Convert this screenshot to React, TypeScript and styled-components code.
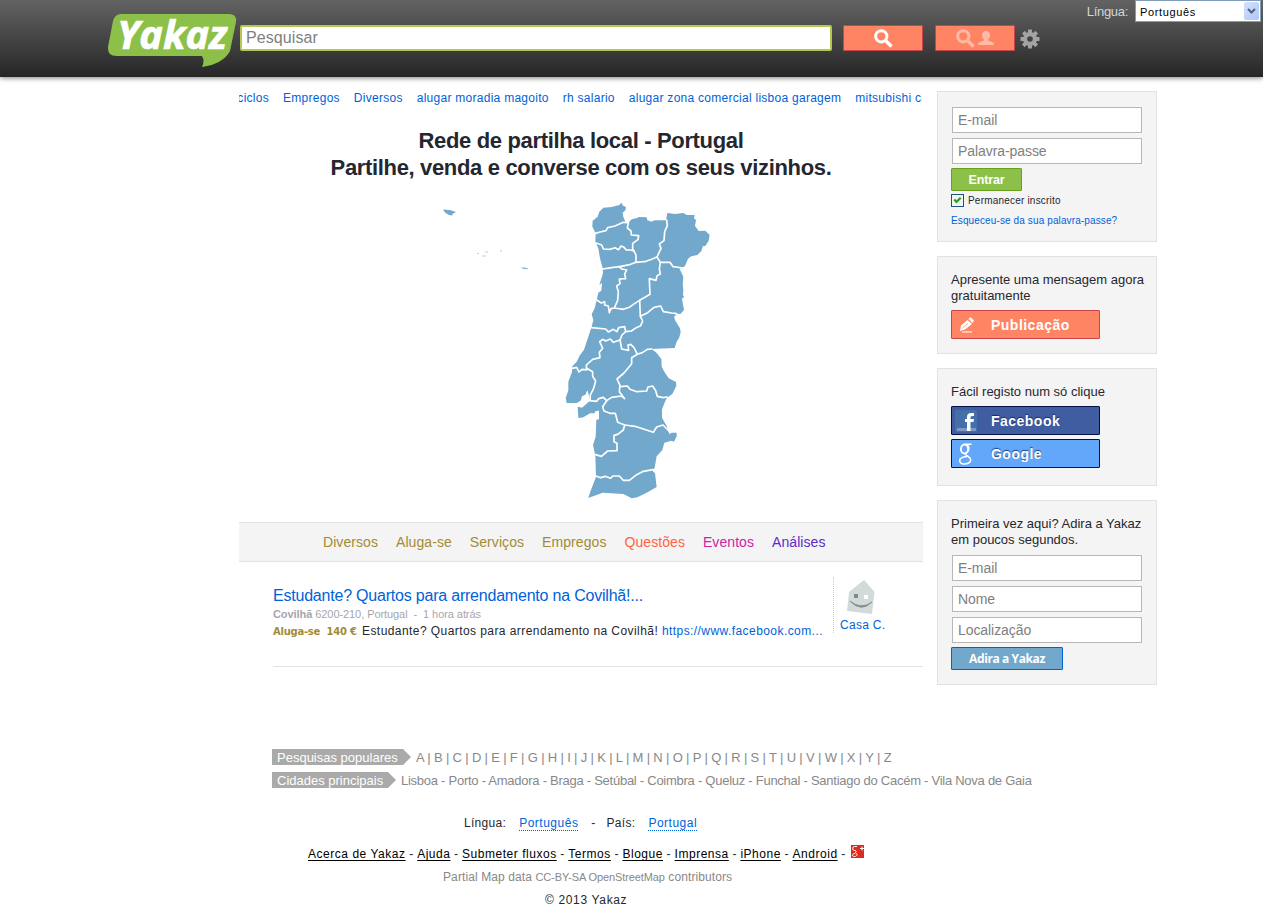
import React from "react";
import styled, { createGlobalStyle } from "styled-components";

const Global = createGlobalStyle`
  * { box-sizing: border-box; }
  html, body { margin: 0; padding: 0; background: #fff; }
  body { font: 13px/16px "Liberation Sans", Arial, sans-serif; color: #25272f; overflow: hidden; }
  a { color: #0062d9; text-decoration: none; }
`;

const Page = styled.div`
  width: 1263px;
  height: 922px;
  overflow: hidden;
`;

/* ---------- header ---------- */
const Header = styled.header`
  height: 77px;
  display: flex;
  align-items: flex-start;
  padding-left: 107px;
  background: linear-gradient(#636363, #262626);
  box-shadow: 0 1px 5px rgba(0, 0, 0, 0.5);
`;
const Logo = styled.svg`
  display: block;
  width: 130px;
  height: 56px;
  margin-top: 12px;
`;
const SearchInput = styled.input`
  width: 592px;
  height: 26px;
  margin: 25px 11px 0 3px;
  padding: 0 4px;
  border: 2px solid #b3c94b;
  border-radius: 2px;
  background: #fff;
  font: 16px "Liberation Sans", Arial, sans-serif;
  letter-spacing: 0.1px;
  outline: none;
  &::placeholder { color: #808080; opacity: 1; }
`;
const SearchButton = styled.button<{ $dim?: boolean }>`
  width: 80px;
  height: 26px;
  margin: 25px ${(p) => (p.$dim ? 5 : 12)}px 0 0;
  padding: 0;
  display: flex;
  align-items: center;
  justify-content: center;
  border: 1px solid #c9444b;
  border-radius: 1px;
  background: #ff8464;
  color: ${(p) => (p.$dim ? "#ffb9a6" : "#fff")};
`;
const PersonIcon = styled.svg`
  width: 16px;
  height: 14px;
  margin-left: 3px;
`;
const Gear = styled.svg`
  width: 20px;
  height: 20px;
  margin-top: 29px;
`;
const Language = styled.div`
  margin-left: auto;
  display: flex;
  gap: 7px;
  color: #d5d5d5;
  line-height: 24px;
  letter-spacing: -0.3px;
`;
const Select = styled.div`
  width: 126px;
  height: 22px;
  margin-right: 2px;
  padding: 1px 1px 1px 4px;
  display: flex;
  justify-content: space-between;
  border: 1px solid #7f9db9;
  background: #fff;
  color: #000;
  font-size: 11px;
  line-height: 20px;
  letter-spacing: 0.65px;
`;
const SelectArrow = styled.span`
  width: 15px;
  height: 18px;
  display: flex;
  align-items: center;
  justify-content: center;
  border-radius: 2px;
  background: linear-gradient(135deg, #d5e1fc, #aec6f6);
`;

/* ---------- main ---------- */
const Columns = styled.div`
  display: flex;
  gap: 14px;
  height: 658px;
  margin: 14px 0 0 239px;
`;
const Main = styled.main`
  width: 684px;
`;
const Ticker = styled.div`
  width: 683px;
  height: 14px;
  display: flex;
  gap: 14px;
  overflow: hidden;
  white-space: nowrap;
  font-size: 12px;
  line-height: 14px;
  letter-spacing: 0.27px;
`;
const TickerStart = styled.a`
  width: 30px;
  flex: none;
  display: flex;
  justify-content: flex-end;
`;
const Heading = styled.h1`
  margin: 22px 0 0;
  text-align: center;
  font-size: 22px;
  line-height: 27px;
  font-weight: bold;
  letter-spacing: -0.34px;
`;
const MapDrawing = styled.svg`
  display: block;
  width: 290px;
  height: 310px;
  margin: 14px 0 0 191px;
`;
const Categories = styled.nav`
  height: 40px;
  margin-top: 17px;
  padding-left: 84px;
  display: flex;
  gap: 18px;
  border-top: 1px solid #e2e2e2;
  border-bottom: 1px solid #e2e2e2;
  background: #f4f4f4;
  font-size: 14px;
  line-height: 39px;
  letter-spacing: 0.07px;
`;
const Category = styled.a<{ $color: string }>`
  color: ${(p) => p.$color};
`;
const Listing = styled.article`
  height: 105px;
  margin-left: 34px;
  padding-top: 15px;
  display: flex;
  border-bottom: 1px solid #e2e2e2;
  white-space: nowrap;
`;
const ListingBody = styled.div`
  width: 561px;
  height: 56px;
  border-right: 1px dotted #ccc;
`;
const ListingTitle = styled.a`
  display: block;
  margin-top: 8px;
  font-size: 16px;
  line-height: 21px;
  letter-spacing: -0.21px;
`;
const ListingMeta = styled.div`
  font-size: 11px;
  line-height: 16px;
  letter-spacing: -0.07px;
  color: #a5a6ae;
  white-space: pre;
`;
const ListingText = styled.div`
  display: flex;
  font-size: 12px;
  line-height: 18px;
  letter-spacing: 0.43px;
`;
const Price = styled.b`
  width: 89px;
  color: #a38b34;
  font: bold 10px/19px "DejaVu Sans", sans-serif;
  letter-spacing: -0.25px;
  white-space: pre;
`;
const Seller = styled.a`
  margin-left: 6px;
  display: flex;
  flex-direction: column;
  font-size: 12px;
  line-height: 16px;
  letter-spacing: 0.3px;
`;
const Avatar = styled.svg`
  width: 30px;
  height: 37px;
  margin: 0 0 3px 6px;
`;

/* ---------- sidebar ---------- */
const Sidebar = styled.aside`
  width: 220px;
  display: flex;
  flex-direction: column;
  gap: 14px;
`;
const Card = styled.section<{ $height: number }>`
  height: ${(p) => p.$height}px;
  padding: 15px 0 0 13px;
  border: 1px solid #e2e2e2;
  background: #f4f4f4;
  white-space: nowrap;
`;
const Field = styled.input`
  display: block;
  width: 190px;
  height: 26px;
  margin: 0 0 5px 1px;
  padding: 0 5px;
  border: 1px solid #b7b7b7;
  background: #fff;
  font: 14px "Liberation Sans", Arial, sans-serif;
  letter-spacing: -0.07px;
  outline: none;
  &::placeholder { color: #808080; opacity: 1; }
`;
const Submit = styled.button<{ $tone: "green" | "blue" }>`
  display: block;
  width: ${(p) => (p.$tone === "green" ? 71 : 112)}px;
  height: 23px;
  margin-top: -1px;
  padding: 0;
  border: 1px solid ${(p) => (p.$tone === "green" ? "#68a21c" : "#0062d9")};
  border-radius: 1px;
  background: ${(p) => (p.$tone === "green" ? "#8dc048" : "#71a8cb")};
  color: #fff;
  font: ${(p) =>
    p.$tone === "green" ? 'bold 12.5px "Liberation Sans", Arial, sans-serif' : 'bold 12px "Open Sans", sans-serif'};
  letter-spacing: ${(p) => (p.$tone === "green" ? -0.1 : -0.4)}px;
`;
const Remember = styled.label`
  display: flex;
  align-items: center;
  gap: 4px;
  height: 13px;
  margin-top: 3px;
  font-size: 10px;
  letter-spacing: 0.2px;
`;
const CheckBox = styled.svg`
  width: 13px;
  height: 13px;
`;
const Forgot = styled.a`
  display: block;
  margin-top: 6px;
  font-size: 10px;
  letter-spacing: 0.12px;
`;
const CardText = styled.p`
  margin: 0 0 7px;
  font-size: 13px;
  line-height: 16px;
`;
const WideButton = styled.button<{ $bg: string; $edge: string; $shadow?: boolean }>`
  width: 149px;
  height: 29px;
  margin: -1px 0 5px;
  padding: 0 0 0 3px;
  display: flex;
  align-items: center;
  border: 1px solid ${(p) => p.$edge};
  border-radius: 1px;
  background: ${(p) => p.$bg};
  color: #fff;
  font: bold 14px "Liberation Sans", Arial, sans-serif;
  letter-spacing: 0.48px;
  text-shadow: ${(p) => (p.$shadow ? "0 -1px 1px rgba(0,20,80,.7)" : "none")};
`;
const ButtonIcon = styled.svg`
  width: 22px;
  height: 22px;
  margin-right: 14px;
  flex: none;
`;

/* ---------- footer ---------- */
const TagRow = styled.div`
  height: 16px;
  margin: 0 0 7px 272px;
  display: flex;
  font-size: 13px;
  line-height: 17px;
  color: #888;
  white-space: nowrap;
`;
const Tag = styled.span<{ $width: number }>`
  width: ${(p) => p.$width}px;
  margin-right: 5px;
  padding-left: 5px;
  background: #aaa;
  color: #fff;
  clip-path: polygon(0 0, calc(100% - 8px) 0, 100% 50%, calc(100% - 8px) 100%, 0 100%);
`;
const TagLinks = styled.span<{ $ls: number }>`
  letter-spacing: ${(p) => p.$ls}px;
`;
const FooterLine = styled.div<{ $top: number; $left: number; $ls?: number }>`
  height: 16px;
  margin: ${(p) => p.$top}px 0 0 ${(p) => p.$left}px;
  display: flex;
  font-size: 12px;
  white-space: pre;
  letter-spacing: ${(p) => p.$ls ?? 0.3}px;
`;
const Dotted = styled.a`
  margin: 0 2px 0 -1.5px;
  border-bottom: 1px dotted #0062d9;
  letter-spacing: 0.5px;
`;
const FooterLink = styled.a`
  color: #000;
  letter-spacing: 0.53px;
  text-decoration: underline;
  text-underline-offset: 2px;
`;
const Credit = styled.span`
  color: #888;
  letter-spacing: 0.1px;
`;
const Small = styled.span`
  font-size: 11px;
  letter-spacing: -0.1px;
`;
const PlusIcon = styled.svg`
  width: 13px;
  height: 13px;
  margin: -1px 0 0 2px;
`;

const Magnifier = () => (
  <svg width="19" height="19" viewBox="0 0 19 19" fill="none" stroke="currentColor">
    <circle cx="7.3" cy="7.3" r="5.6" strokeWidth="3" />
    <path d="M11.5 11.5l6 6" strokeWidth="3.4" />
  </svg>
);

const coast =
  "M184 23L189 32 198 36 196 46 188 53 190 66 196 80 205 83 215 73 232 69 236 66 260 67 262 76 275 80 283 76 318 76 322 54 345 57 370 54 380 60 404 60 402 70 408 75 405 93 416 108 436 107 449 120 446 137 436 153 429 153 424 168 412 180 394 184 384 191 376 211 368 220 358 220 370 245 368 270 370 283 369 300 372 305 366 312 372 345 362 356 350 357 342 366 346 377 360 400 362 412 357 430 350 440 344 459 275 462 290 474 304 492 305 515 313 530 326 550 348 561 349 572 337 597 321 608 315 620 306 643 306 668 321 695 328 717 335 713 350 713 350 724 342 740 334 737 313 743 307 765 290 784 284 818 277 827 285 835 290 876 260 893 232 907 215 910 190 897 128 893 85 909 91 890 108 846 106 782 99 750 107 725 109 674 117 673 117 647 107 648 103 655 90 655 70 667 55 669 53 635 66 638 90 617 86 598 82 586 76 599 66 604 62 617 50 624 20 624 17 610 25 586 25 560 36 531 36 515 50 500 60 480 72 464 94 398 100 375 95 358 104 340 110 315 115 293 124 287 126 263 118 270 129 235 128 220 120 190 115 160 106 140 107 115 97 95 98 77 113 65 118 50 130 38 155 36 178 30Z";

const districts = [
  "M107 115L120 111 138 107 143 98 165 93 190 82 205 83",
  "M205 83L202 99 213 108 214 120 236 122 234 134 218 145 218 163 222 168",
  "M108 144L125 150 130 162 151 163 165 158 176 164 183 153 192 157 199 165 212 165 222 168 228 180 228 202",
  "M320 75L322 92 314 110 312 137 298 147 303 160 291 186 275 193 258 199 228 202 212 208 180 215 160 217 128 222",
  "M291 186L301 202 330 202 339 215 370 219",
  "M176 214L186 222 200 225 194 237 197 251 178 252 180 266 170 273 175 290 173 316 163 339 153 341 148 353 145 333 134 330 134 320 124 324 110 315",
  "M301 202L298 222 301 237 291 242 288 256 268 251 270 298 260 304 239 316 220 328 208 337 190 343 163 339",
  "M239 316L241 364 263 353 282 337 302 333 310 350 335 354 350 356",
  "M241 364L248 378 242 392 229 398 214 408 197 410 194 395 176 398 171 410 160 403 145 411 137 402 94 398",
  "M197 410L186 420 180 435 160 442 151 432 137 438 128 433 119 440 128 460 118 472 120 488 98 493 79 510 80 525 66 523 57 531 50 517 36 520",
  "M180 435L185 462 206 466 204 450 212 448 222 458 232 478 247 473 262 463 275 462",
  "M232 478L215 488 215 506 192 534 171 552 180 571 178 590 194 611 184 603 155 607 140 617 130 607 116 611 110 619 90 617",
  "M79 519L98 530 98 544 107 558 101 580 91 600 90 617",
  "M180 575L202 573 210 583 230 590 260 588 264 576 278 573 287 587 292 604 310 608 321 606",
  "M140 617L128 635 132 648 150 655 166 655 173 682 194 690 225 694 250 702 280 712 290 696 309 690 327 708",
  "M194 690L190 705 173 718 162 721 162 740 171 745 171 767 143 768 124 784 107 779",
  "M108 843L122 848 136 844 151 850 159 843 178 843 190 856 208 856 230 839 250 829 279 824",
];

const PortugalMap = () => (
  <MapDrawing viewBox="430 195 290 310">
    <g fill="#71a8cb">
      <path d="M443 209.500l7 .5 6 2-3 1.500-1 2-3-.5-4-2.500z" />
      <path d="M521 267.500h4l3 .8-1 1-4-.4z" opacity=".8" />
      <path d="M477 253h2v1h-2zM485 251.500h3v1h-3zM482 255.500h4v1h-4zM500 250h1.500v1.500H500z" opacity=".5" />
    </g>
    <g transform="translate(560 195) scale(.33333)" strokeLinejoin="round">
      <path d={coast} fill="#71a8cb" />
      <g fill="none" stroke="#fff" strokeWidth="5" strokeLinecap="round">
        {districts.map((d) => (
          <path key={d} d={d} />
        ))}
      </g>
    </g>
  </MapDrawing>
);

const categories: [string, string][] = [
  ["Diversos", "#a38b34"],
  ["Aluga-se", "#a38b34"],
  ["Serviços", "#a38b34"],
  ["Empregos", "#a38b34"],
  ["Questões", "#ff6340"],
  ["Eventos", "#cc25a5"],
  ["Análises", "#5c2bc9"],
];

const footerLinks = ["Acerca de Yakaz", "Ajuda", "Submeter fluxos", "Termos", "Blogue", "Imprensa", "iPhone", "Android"];

export default function App() {
  return (
    <Page>
      <Global />
      <Header>
        <Logo viewBox="107 12 130 56">
          <path
            fill="#8dc048"
            d="M121 14H229Q237 14 236 22L230 51Q223 64 202 67Q205 61 202 56H117Q107 56 108 47L113 21Q115 14 121 14Z"
          />
          <text x="117" y="49" fill="#fff" stroke="#fff" strokeWidth=".7" fontFamily="Open Sans, sans-serif" fontStyle="italic" fontWeight="700" fontSize="39" textLength="110" lengthAdjust="spacingAndGlyphs">
            Yakaz
          </text>
        </Logo>
        <SearchInput placeholder="Pesquisar" />
        <SearchButton aria-label="Pesquisar">
          <Magnifier />
        </SearchButton>
        <SearchButton $dim aria-label="Pesquisar pessoas">
          <Magnifier />
          <PersonIcon viewBox="0 0 16 14" fill="currentColor">
            <path d="M8 0C5.500 0 4 1.500 4 4c0 2 .8 3.500 2 4.500v1L1 11.500Q0 12 0 14h16q0-2-1-2.500L10 9.500v-1c1.200-1 2-2.500 2-4.500C12 1.500 10.500 0 8 0z" />
          </PersonIcon>
        </SearchButton>
        <Gear viewBox="-10 -10 20 20">
          <g fill="#a3a3a3">
            {[0, 45, 90, 135].map((a) => (
              <rect key={a} x="-2" y="-9.500" width="4" height="19" rx=".6" transform={`rotate(${a})`} />
            ))}
            <circle r="7" />
          </g>
          <circle r="2.800" fill="#424242" />
        </Gear>
        <Language>
          <span>Língua:</span>
          <Select>
            Português
            <SelectArrow>
              <svg width="9" height="6" viewBox="0 0 9 6" fill="none" stroke="#4d6185" strokeWidth="2">
                <path d="M1 1l3.500 3.500L8 1" />
              </svg>
            </SelectArrow>
          </Select>
        </Language>
      </Header>

      <Columns>
        <Main>
          <Ticker>
            <TickerStart>motociclos</TickerStart>
            <a>Empregos</a>
            <a>Diversos</a>
            <a>alugar moradia magoito</a>
            <a>rh salario</a>
            <a>alugar zona comercial lisboa garagem</a>
            <a>mitsubishi canter</a>
          </Ticker>
          <Heading>
            Rede de partilha local - Portugal
            <br />
            Partilhe, venda e converse com os seus vizinhos.
          </Heading>
          <PortugalMap />
          <Categories>
            {categories.map(([name, color]) => (
              <Category key={name} $color={color}>
                {name}
              </Category>
            ))}
          </Categories>
          <Listing>
            <ListingBody>
              <ListingTitle>Estudante? Quartos para arrendamento na Covilhã!...</ListingTitle>
              <ListingMeta>
                <b>Covilhã</b>
                {" 6200-210, Portugal  -  1 hora atrás"}
              </ListingMeta>
              <ListingText>
                <Price>{"Aluga-se  140 €"}</Price>
                <span>
                  Estudante? Quartos para arrendamento na Covilhã! <a>https://www.facebook.com...</a>
                </span>
              </ListingText>
            </ListingBody>
            <Seller>
              <Avatar viewBox="0 0 30 37">
                <path d="M18 3L28.500 15 26 37 1 34 3 15z" fill="#d3dada" />
                <path d="M8 17h4v4H8z" fill="#7d8b8e" />
                <path d="M18 18h4v4h-4z" fill="#fff" />
                <path d="M4 24Q15 33 26 25Q15 36 4 24z" fill="#7d8b8e" stroke="#7d8b8e" strokeWidth=".7" />
              </Avatar>
              Casa C.
            </Seller>
          </Listing>
        </Main>

        <Sidebar>
          <Card $height={151}>
            <Field placeholder="E-mail" />
            <Field placeholder="Palavra-passe" />
            <Submit $tone="green">Entrar</Submit>
            <Remember>
              <CheckBox viewBox="0 0 13 13">
                <rect x=".5" y=".5" width="12" height="12" fill="#f3f3ef" stroke="#1c5180" />
                <path d="M3.300 5.500l2.200 2.500 4.200-4.300" fill="none" stroke="#21a121" strokeWidth="2.200" />
              </CheckBox>
              Permanecer inscrito
            </Remember>
            <Forgot>Esqueceu-se da sua palavra-passe?</Forgot>
          </Card>
          <Card $height={98}>
            <CardText>
              Apresente uma mensagem agora
              <br />
              gratuitamente
            </CardText>
            <WideButton $bg="#ff8464" $edge="#c9444b">
              <ButtonIcon viewBox="0 0 22 22" fill="#fff">
                <path d="M5 17l1-5.500 6.500-5.500 4.500 4-7 5.500zM13.500 5l2-2 3.500 3.500-1.500 2.500zM7 17.500l10-.3v1.300H7z" />
                <path d="M7.500 14l5.500-4.500" stroke="#ff8464" strokeWidth=".7" />
              </ButtonIcon>
              Publicação
            </WideButton>
          </Card>
          <Card $height={118}>
            <CardText>Fácil registo num só clique</CardText>
            <WideButton $bg="#415da1" $edge="#03134a" $shadow>
              <ButtonIcon viewBox="0 0 22 22">
                <rect width="22" height="22" rx="2" fill="#456fa9" />
                <path d="M2 18h19v3H2z" fill="#7d98c7" />
                <path d="M12 21v-9H10V9h2V7q0-4 4-4h3v3h-2q-1.500 0-1.500 1.500V9H19l-.5 3h-3v9z" fill="#fff" />
              </ButtonIcon>
              Facebook
            </WideButton>
            <WideButton $bg="#63a7fb" $edge="#03134a" $shadow>
              <ButtonIcon viewBox="0 0 22 22" fill="none" stroke="#fff" strokeWidth="1.500">
                <ellipse cx="9.500" cy="6" rx="3.600" ry="4.500" strokeWidth="1.800" />
                <path d="M9.500 1.200H16.500M12.500 2q3 4-.5 7.500-3 2 .5 3.500 5 3 2 6.500-4 2.500-8 1-3-2-1-5Q8 13.500 12 13.500" />
              </ButtonIcon>
              Google
            </WideButton>
          </Card>
          <Card $height={185}>
            <CardText>
              Primeira vez aqui? Adira a Yakaz
              <br />
              em poucos segundos.
            </CardText>
            <Field placeholder="E-mail" />
            <Field placeholder="Nome" />
            <Field placeholder="Localização" />
            <Submit $tone="blue">Adira a Yakaz</Submit>
          </Card>
        </Sidebar>
      </Columns>

      <footer>
        <TagRow>
          <Tag $width={139}>Pesquisas populares</Tag>
          <TagLinks $ls={-0.16}>{"ABCDEFGHIJKLMNOPQRSTUVWXYZ".split("").join(" | ")}</TagLinks>
        </TagRow>
        <TagRow>
          <Tag $width={124}>Cidades principais</Tag>
          <TagLinks $ls={-0.26}>
            Lisboa - Porto - Amadora - Braga - Setúbal - Coimbra - Queluz - Funchal - Santiago do Cacém - Vila Nova de Gaia
          </TagLinks>
        </TagRow>
        <FooterLine $top={27} $left={464}>
          {"Língua:    "}
          <Dotted>Português</Dotted>
          {"   -   País:    "}
          <Dotted>Portugal</Dotted>
        </FooterLine>
        <FooterLine $top={15} $left={308}>
          {footerLinks.map((name) => (
            <React.Fragment key={name}>
              <FooterLink>{name}</FooterLink>
              {" - "}
            </React.Fragment>
          ))}
          <PlusIcon viewBox="0 0 13 13">
            <path d="M0 0h13v13H0z" fill="#dd2b20" />
            <path d="M6 1.500H3.500a1.800 2 0 000 4c3 0 1.500 1.500.5 2 3 1 2.500 4-.5 4S.5 9 4 8.500M9 3.500h4M11 1.500v4" fill="none" stroke="#fff" />
          </PlusIcon>
        </FooterLine>
        <FooterLine $top={7} $left={443}>
          <Credit>
            Partial Map data <Small>CC-BY-SA OpenStreetMap</Small> contributors
          </Credit>
        </FooterLine>
        <FooterLine $top={7} $left={545} $ls={0.65}>
          © 2013 Yakaz
        </FooterLine>
      </footer>
    </Page>
  );
}
